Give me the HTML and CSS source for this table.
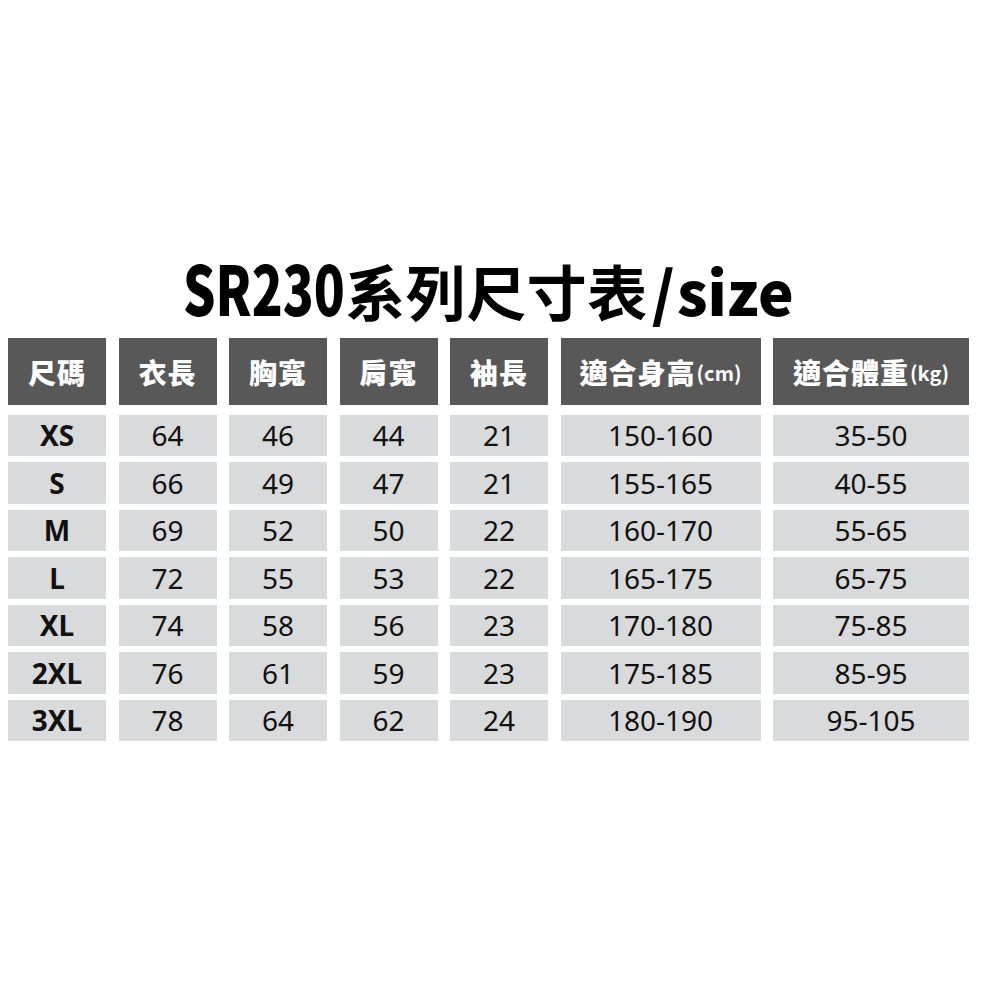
FILE: index.html
```html
<!DOCTYPE html>
<html lang="zh-Hant">
<head>
<meta charset="utf-8">
<title>SR230系列尺寸表/size</title>
<link rel="stylesheet" href="styles.css">
</head>
<body>
<div class="sheet">
  <h1 class="title"><span class="code"><span class="code-in">SR230</span></span><span class="cjk">系列尺寸表</span><span class="slash">/</span><span class="latin">size</span></h1>
  <div class="table">
    <div class="cell head">尺碼</div>
    <div class="cell head">衣長</div>
    <div class="cell head">胸寬</div>
    <div class="cell head">肩寬</div>
    <div class="cell head">袖長</div>
    <div class="cell head">適合身高<small>(cm)</small></div>
    <div class="cell head">適合體重<small>(kg)</small></div>

    <div class="cell size">XS</div><div class="cell">64</div><div class="cell">46</div><div class="cell">44</div><div class="cell">21</div><div class="cell">150-160</div><div class="cell">35-50</div>
    <div class="cell size">S</div><div class="cell">66</div><div class="cell">49</div><div class="cell">47</div><div class="cell">21</div><div class="cell">155-165</div><div class="cell">40-55</div>
    <div class="cell size">M</div><div class="cell">69</div><div class="cell">52</div><div class="cell">50</div><div class="cell">22</div><div class="cell">160-170</div><div class="cell">55-65</div>
    <div class="cell size">L</div><div class="cell">72</div><div class="cell">55</div><div class="cell">53</div><div class="cell">22</div><div class="cell">165-175</div><div class="cell">65-75</div>
    <div class="cell size">XL</div><div class="cell">74</div><div class="cell">58</div><div class="cell">56</div><div class="cell">23</div><div class="cell">170-180</div><div class="cell">75-85</div>
    <div class="cell size">2XL</div><div class="cell">76</div><div class="cell">61</div><div class="cell">59</div><div class="cell">23</div><div class="cell">175-185</div><div class="cell">85-95</div>
    <div class="cell size">3XL</div><div class="cell">78</div><div class="cell">64</div><div class="cell">62</div><div class="cell">24</div><div class="cell">180-190</div><div class="cell">95-105</div>
  </div>
</div>
</body>
</html>
```
FILE: styles.css
```css
html, body {
  margin: 0;
  padding: 0;
  background: #ffffff;
}
body {
  padding: 8px;
  font-family: "Noto Sans", "Noto Sans CJK TC", sans-serif;
  color: #111111;
}
.sheet {
  width: 961px;
  padding-top: 243px;
}
.title {
  display: flex;
  justify-content: center;
  align-items: baseline;
  height: 72px;
  margin: 0 0 15px 0;
  font-family: "Noto Sans CJK TC", sans-serif;
  font-size: 60px;
  line-height: 72px;
  color: #000000;
}
.code {
  display: inline-block;
  width: 148px;
  white-space: nowrap;
  font-size: 68px;
  font-weight: 900;
}
.code-in {
  display: inline-block;
  transform: scaleX(0.75);
  transform-origin: left center;
}
.cjk {
  font-weight: 700;
  letter-spacing: 0.5px;
  margin-left: 14px;
}
.slash {
  font-weight: 900;
  margin-left: 4px;
  margin-right: 2px;
}
.latin {
  font-weight: 900;
  font-size: 60px;
}
.table {
  display: grid;
  grid-template-columns: repeat(5, 98px) 200px 196px;
  grid-template-rows: 70.5px repeat(7, 41.5px);
  column-gap: 12.5px;
  row-gap: 6px;
}
.cell {
  display: flex;
  align-items: center;
  justify-content: center;
  background: #d9dadb;
  font-size: 28px;
  line-height: 1;
  color: #111111;
}
.head {
  height: 67px;
  margin-bottom: 3.5px;
  background: #585858;
  color: #ffffff;
  font-family: "Noto Sans CJK TC", sans-serif;
  font-weight: 900;
  font-size: 28px;
  letter-spacing: 1px;
}
.head small {
  font-size: 20px;
  font-weight: 700;
  letter-spacing: 0;
  margin-left: 1px;
  padding-top: 3px;
}
.size {
  font-weight: 700;
}
```
